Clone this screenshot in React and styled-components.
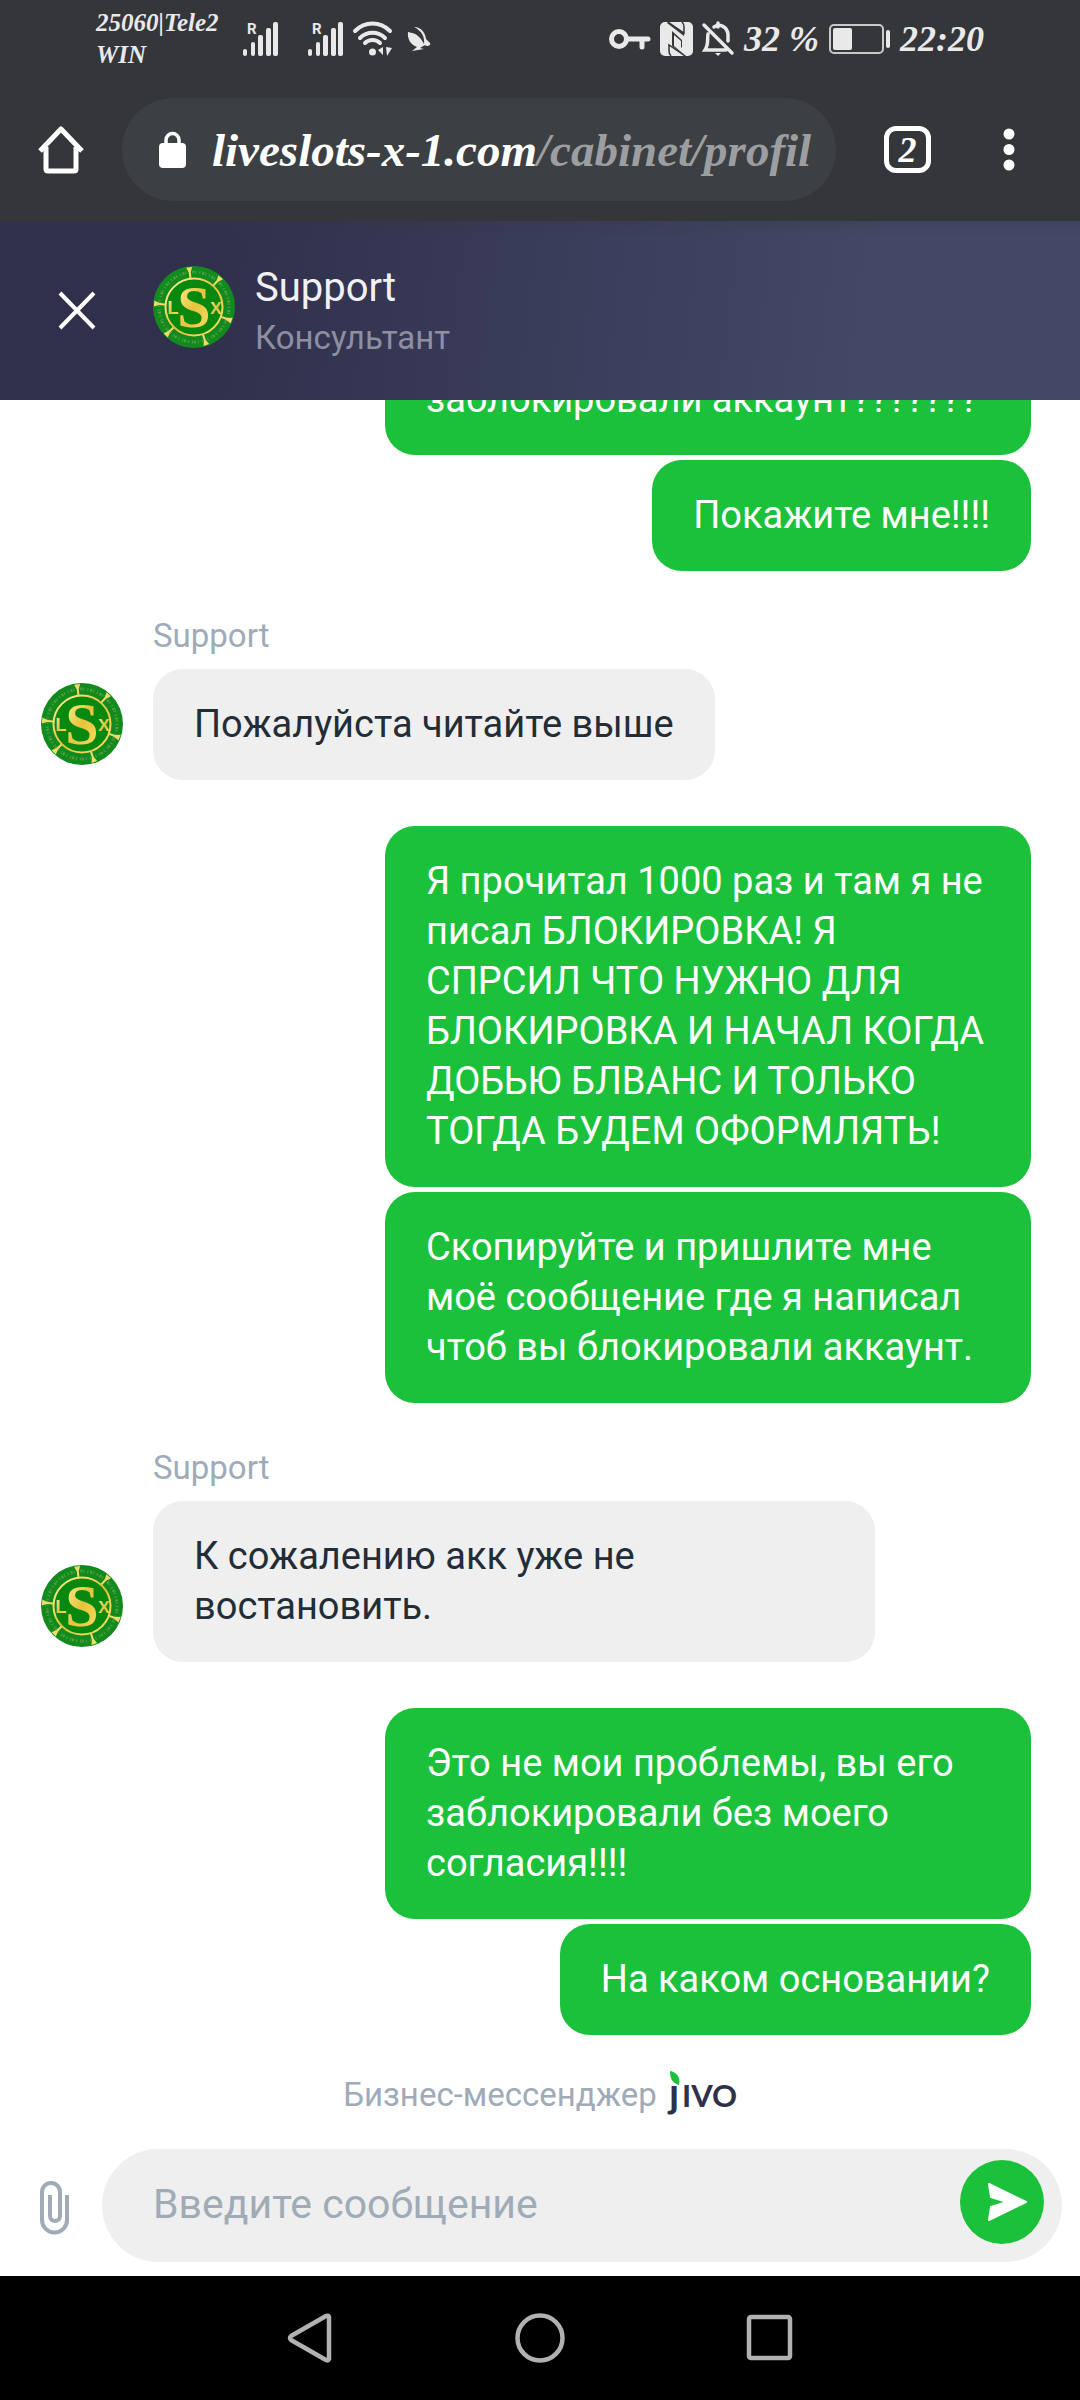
import React from "react";
import styled, { createGlobalStyle } from "styled-components";

const GlobalStyle = createGlobalStyle`
  *, *::before, *::after { box-sizing: border-box; }
  body {
    margin: 0;
    background: #fff;
    font-family: Roboto, "Noto Sans", sans-serif;
  }
  button {
    display: flex;
    align-items: center;
    justify-content: center;
    flex: none;
    padding: 0;
    border: 0;
    background: none;
    color: inherit;
    font: inherit;
    cursor: pointer;
  }
  svg { display: block; flex: none; overflow: visible; }
`;

const Shell = styled.div`
  display: flex;
  flex-direction: column;
  height: 100vh;
`;

/* ---------- system status ---------- */

const StatusBar = styled.div`
  display: flex;
  align-items: center;
  justify-content: space-between;
  height: 78px;
  flex: none;
  padding: 0 96px;
  background: #35363a;
  color: #e9e9e9;
  font-family: "Liberation Serif", serif;
  font-style: italic;
  font-weight: 700;
`;

const StatusGroup = styled.div`
  display: flex;
  align-items: center;
  gap: 10px;
`;

const Carrier = styled.div`
  margin-right: 14px;
  font-size: 25px;
  line-height: 32px;
`;

const SimSlot = styled.div`
  padding-right: ${(p) => (p.$spaced ? "20px" : "0")};
`;

const StatusText = styled.span`
  font-size: 36px;
  line-height: 40px;
  white-space: nowrap;
`;

/* ---------- browser toolbar ---------- */

const Toolbar = styled.div`
  display: flex;
  align-items: center;
  height: 143px;
  flex: none;
  padding: 0 46px 0 36px;
  background: #35363a;
  color: #fff;
`;

const ToolButton = styled.button`
  width: 50px;
  height: 50px;
`;

const TabsButton = styled(ToolButton)`
  width: 47px;
  margin-right: 53px;
`;

const AddressBar = styled.div`
  display: flex;
  flex: 1;
  align-items: center;
  gap: 26px;
  min-width: 0;
  height: 103px;
  margin: 0 48px 0 36px;
  padding: 0 20px 0 37px;
  border-radius: 52px;
  background: #3c4043;
`;

const Address = styled.div`
  flex: 1;
  min-width: 0;
  overflow: hidden;
  color: #9d9ea1;
  font-family: "Liberation Serif", serif;
  font-size: 47px;
  font-style: italic;
  font-weight: 700;
  line-height: 60px;
  white-space: nowrap;
`;

const Host = styled.span`
  color: #fff;
`;

const TabCount = styled.span`
  display: flex;
  align-items: center;
  justify-content: center;
  width: 47px;
  height: 47px;
  border: 5px solid #fff;
  border-radius: 12px;
  font-family: "Liberation Serif", serif;
  font-size: 36px;
  font-style: italic;
  font-weight: 700;
  line-height: 36px;
`;

/* ---------- chat ---------- */

const ChatHeader = styled.header`
  display: flex;
  align-items: center;
  height: 179px;
  flex: none;
  padding: 0 52px;
  background:
    linear-gradient(rgba(53, 54, 58, 0.25), rgba(53, 54, 58, 0) 16px),
    linear-gradient(97deg, #30304c 20%, #434867 80%);
`;

const CloseButton = styled.button`
  width: 50px;
  height: 50px;
  margin-right: 51px;
`;

const HeaderAvatar = styled.div`
  margin: 0 20px 8px 0;
`;

const Agent = styled.div`
  display: flex;
  flex-direction: column;
  gap: 6px;
`;

const AgentName = styled.h1`
  margin: 0;
  color: #f1f1f4;
  font-size: 40px;
  font-weight: 400;
  line-height: 48px;
`;

const AgentRole = styled.div`
  color: #8e8fa0;
  font-size: 33px;
  line-height: 40px;
`;

const Thread = styled.main`
  display: flex;
  flex: 1;
  flex-direction: column;
  justify-content: flex-end;
  gap: 46px;
  min-height: 0;
  padding: 0 49px 0 41px;
  overflow: hidden;
`;

const Outgoing = styled.section`
  display: flex;
  flex: none;
  flex-direction: column;
  align-items: flex-end;
  align-self: flex-end;
  gap: 5px;
  width: 100%;
  max-width: 646px;
`;

const Incoming = styled.section`
  display: grid;
  flex: none;
  grid-template-columns: 82px minmax(0, 722px);
  column-gap: 30px;
  justify-items: start;
`;

const Sender = styled.div`
  grid-column: 2;
  margin-bottom: 14px;
  color: #9fabb7;
  font-size: 33px;
  line-height: 38px;
`;

const IncomingAvatar = styled.div`
  align-self: end;
  padding-bottom: 15px;
`;

const Bubble = styled.p`
  min-width: ${(p) => (p.$wide ? "100%" : "0")};
  margin: 0;
  padding: 30px 41px 31px;
  border-radius: 30px;
  background: ${(p) => (p.$mine ? "#1bc13a" : "#efefef")};
  color: ${(p) => (p.$mine ? "#fff" : "#222d38")};
  font-size: 38px;
  line-height: 50px;
`;

const Branding = styled.a`
  display: flex;
  align-items: center;
  justify-content: center;
  gap: 12px;
  height: 114px;
  flex: none;
  padding-top: 6px;
  color: #9fabb7;
  font-size: 33px;
  line-height: 40px;
  text-decoration: none;
`;

const Composer = styled.form`
  display: flex;
  align-items: center;
  flex: none;
  padding: 0 18px 14px 30px;
`;

const AttachButton = styled.button`
  width: 50px;
  height: 60px;
  margin: 4px 22px 0 0;
`;

const Field = styled.div`
  display: flex;
  flex: 1;
  min-width: 0;
  padding: 11px 18px 18px 51px;
  border-radius: 57px;
  background: #efefef;
`;

const MessageInput = styled.input`
  flex: 1;
  min-width: 0;
  padding: 4px 0 0;
  border: 0;
  outline: 0;
  background: none;
  color: #222d38;
  font-family: inherit;
  font-size: 41px;
  line-height: 50px;
  &::placeholder { color: #9fabb7; opacity: 1; }
`;

const SendButton = styled.button`
  width: 84px;
  height: 84px;
  border-radius: 50%;
  background: #1bc13a;
`;

const SystemNav = styled.nav`
  display: flex;
  align-items: center;
  justify-content: center;
  gap: 180px;
  height: 124px;
  flex: none;
  background: #000;
`;

const NavButton = styled.button`
  width: 50px;
  height: 50px;
`;

/* ---------- drawings ---------- */

const Signal = () => (
  <svg width="35" height="34" viewBox="0 0 35 34" fill="#e9e9e9">
    <text x="4" y="12" fontFamily="Roboto, sans-serif" fontSize="15" fontStyle="normal" fontWeight="700">R</text>
    <rect x="0" y="27" width="4" height="7" rx="2" />
    <rect x="8" y="20" width="4" height="14" rx="2" />
    <rect x="15" y="13" width="5" height="21" rx="2" />
    <rect x="23" y="6" width="5" height="28" rx="2" />
    <rect x="30" y="0" width="5" height="34" rx="2" />
  </svg>
);

const Wifi = () => (
  <svg width="40" height="34" viewBox="0 0 40 34" fill="none" stroke="#e9e9e9" strokeWidth="4" strokeLinecap="round">
    <path d="M2 9C12-1 27-1 37 9M7 16c7-7 18-7 25 0M12 21c4-4 11-4 15 0" />
    <circle cx="19.500" cy="30" r="3.500" fill="#e9e9e9" stroke="none" />
    <path d="M30 25v8l-5-5zM33 25l6 1-5 8z" fill="#e9e9e9" stroke="none" />
  </svg>
);

const Bird = () => (
  <svg width="33" height="26" viewBox="0 0 33 26" fill="#e9e9e9">
    <path d="M5 6c4 1 7 1 10 4 4 3 5 7 7 9l-5 3 4 1-12 2 5-4C8 19 4 13 5 6z" />
    <path d="M11 1c7 0 11 5 12 12l4 4c1 2-1 3-3 3l-3-1c1-8-2-14-10-18z" />
  </svg>
);

const Key = () => (
  <svg width="41" height="22" viewBox="0 0 41 22" fill="none" stroke="#e9e9e9" strokeWidth="5" strokeLinecap="round">
    <circle cx="10" cy="11" r="7.500" />
    <path d="M19 11h20M33 12v7" />
  </svg>
);

const Nfc = () => (
  <svg width="33" height="34" viewBox="0 0 33 34">
    <rect width="33" height="34" rx="5" fill="#e9e9e9" />
    <path d="M8 0l16 11V5q0-3-2-5M25 34L9 23v6q0 3 2 5" fill="none" stroke="#35363a" strokeWidth="1.500" />
    <path d="M8 0l16 11v3L7 1zM25 34L12 24V9l10 9v8l-8-8v6l12 10z" fill="#35363a" />
    <path d="M14 13v9l7 5v-8z" fill="#e9e9e9" />
  </svg>
);

const BellOff = () => (
  <svg width="31" height="34" viewBox="0 0 31 34" fill="none" stroke="#e9e9e9" strokeWidth="3.500" strokeLinecap="round">
    <path d="M5 12c-1 5 1 10-3 16h21M11 5c6-4 13 0 14 7v7M15 1v4M1 3l28 28" />
    <path d="M12 31h6l-3 3z" fill="#e9e9e9" stroke="none" />
  </svg>
);

const Battery = () => (
  <svg width="61" height="30" viewBox="0 0 61 30">
    <rect x="1" y="1" width="53" height="28" rx="4" fill="none" stroke="#c9c9ca" strokeWidth="2" />
    <rect x="4" y="4" width="19" height="22" rx="2" fill="#e9e9e9" />
    <rect x="57" y="6" width="4" height="18" rx="2" fill="#e9e9e9" />
  </svg>
);

const Home = () => (
  <svg width="48" height="50" viewBox="0 0 48 50" fill="none" stroke="#fff" strokeWidth="5" strokeLinejoin="round">
    <path d="M3 26L24 4l21 22M9 22v22q0 2 2 2h26q2 0 2-2V22" />
  </svg>
);

const Lock = () => (
  <svg width="27" height="37" viewBox="0 0 27 37">
    <path d="M7 14V9a6.500 6.500 0 0113 0v5" fill="none" stroke="#fff" strokeWidth="3.500" />
    <rect y="12" width="27" height="25" rx="4" fill="#fff" />
  </svg>
);

const Dots = () => (
  <svg width="12" height="43" viewBox="0 0 12 43" fill="#fff">
    <circle cx="6" cy="6" r="5.500" />
    <circle cx="6" cy="21.500" r="5.500" />
    <circle cx="6" cy="37" r="5.500" />
  </svg>
);

const Cross = () => (
  <svg width="36" height="37" viewBox="0 0 36 37" stroke="#fff" strokeWidth="4">
    <path d="M1 1l34 35M35 1L1 36" />
  </svg>
);

const Coin = ({ id }) => (
  <svg width="82" height="82" viewBox="0 0 82 82" role="img" aria-label="LSX">
    <defs>
      <linearGradient id={id} x1="0" y1="0" x2="1" y2="1">
        <stop offset="0" stopColor="#fff3a0" />
        <stop offset="0.500" stopColor="#e6c33c" />
        <stop offset="1" stopColor="#fbe467" />
      </linearGradient>
    </defs>
    <circle cx="41" cy="41" r="41" fill="#128a1e" />
    <circle cx="41" cy="41" r="35" fill="none" stroke="#8fb565" strokeWidth="3" strokeDasharray="1 2 2 1 1 3" opacity="0.500" />
    {[-7, 42, 110, 162, 225, 275].map((angle) => (
      <path key={angle} d="M38 1h6l-2 5v6h-2V6z" fill="#f1dc6a" transform={`rotate(${angle} 41 41)`} />
    ))}
    <circle cx="41" cy="41" r="28.500" fill="#08880f" stroke={`url(#${id})`} strokeWidth="2" />
    <g fill={`url(#${id})`} fontFamily="Liberation Serif, serif" fontWeight="700" textAnchor="middle">
      <text x="41" y="61" fontSize="60">S</text>
      <text x="20" y="48" fontSize="18" fontFamily="Liberation Sans, sans-serif">L</text>
      <text x="63" y="48" fontSize="17" fontFamily="Liberation Sans, sans-serif">X</text>
    </g>
  </svg>
);

const JivoLogo = () => (
  <svg width="68" height="50" viewBox="0 0 68 50" fill="#2f3148" role="img" aria-label="jivo">
    <g fontFamily="Lato, sans-serif" fontWeight="700">
      <text x="0" y="37" fontSize="40">j</text>
      <text x="13" y="37" fontSize="31">IVO</text>
    </g>
    <path d="M0 0h13v14H0z" fill="#fff" />
    <path d="M1 1c6 1 11 6 9 14C3 13 1 8 1 1z" fill="#1bc13a" />
  </svg>
);

const Clip = () => (
  <svg width="30" height="54" viewBox="0 0 30 54" fill="none" stroke="#a1abb8" strokeWidth="4">
    <path d="M27 14v25a12 12 0 01-25 0V11a9 9 0 0118 0v24a5 5 0 01-10 0V14" />
  </svg>
);

const Plane = () => (
  <svg width="84" height="84" viewBox="0 0 84 84" fill="#fff" stroke="#fff" strokeWidth="2" strokeLinejoin="round">
    <path d="M29 24l37 18-37 18 2-13 16-5-16-5z" />
  </svg>
);

const navStroke = { fill: "none", stroke: "#b1b1b1", strokeWidth: 4.5, strokeLinejoin: "round" };

const messages = [
  {
    mine: true,
    items: [{ text: "заблокировали аккаунт???????", wide: true }, { text: "Покажите мне!!!!" }],
  },
  { items: [{ text: "Пожалуйста читайте выше" }] },
  {
    mine: true,
    items: [
      { text: "Я прочитал 1000 раз и там я не писал БЛОКИРОВКА! Я СПРСИЛ ЧТО НУЖНО ДЛЯ БЛОКИРОВКА И НАЧАЛ КОГДА ДОБЬЮ БЛВАНС И ТОЛЬКО ТОГДА БУДЕМ ОФОРМЛЯТЬ!" },
      { text: "Скопируйте и пришлите мне моё сообщение где я написал чтоб вы блокировали аккаунт." },
    ],
  },
  { items: [{ text: "К сожалению акк уже не востановить." }] },
  {
    mine: true,
    items: [
      { text: "Это не мои проблемы, вы его заблокировали без моего согласия!!!!" },
      { text: "На каком основании?" },
    ],
  },
];

export default function App() {
  return (
    <Shell>
      <GlobalStyle />
      <StatusBar>
        <StatusGroup>
          <Carrier>25060|Tele2<br />WIN</Carrier>
          <SimSlot $spaced><Signal /></SimSlot>
          <SimSlot><Signal /></SimSlot>
          <Wifi />
          <Bird />
        </StatusGroup>
        <StatusGroup>
          <Key />
          <Nfc />
          <BellOff />
          <StatusText>32 %</StatusText>
          <Battery />
          <StatusText>22:20</StatusText>
        </StatusGroup>
      </StatusBar>

      <Toolbar>
        <ToolButton aria-label="Главная"><Home /></ToolButton>
        <AddressBar>
          <Lock />
          <Address><Host>liveslots-x-1.com</Host>/cabinet/profil</Address>
        </AddressBar>
        <TabsButton aria-label="Вкладки: 2"><TabCount>2</TabCount></TabsButton>
        <ToolButton aria-label="Меню"><Dots /></ToolButton>
      </Toolbar>

      <ChatHeader>
        <CloseButton aria-label="Закрыть"><Cross /></CloseButton>
        <HeaderAvatar><Coin id="coin-header" /></HeaderAvatar>
        <Agent>
          <AgentName>Support</AgentName>
          <AgentRole>Консультант</AgentRole>
        </Agent>
      </ChatHeader>

      <Thread>
        {messages.map((group, g) =>
          group.mine ? (
            <Outgoing key={g}>
              {group.items.map((m) => (
                <Bubble key={m.text} $mine $wide={m.wide}>{m.text}</Bubble>
              ))}
            </Outgoing>
          ) : (
            <Incoming key={g}>
              <Sender>Support</Sender>
              <IncomingAvatar><Coin id={`coin-${g}`} /></IncomingAvatar>
              <Bubble>{group.items[0].text}</Bubble>
            </Incoming>
          )
        )}
      </Thread>

      <Branding href="#jivo">
        Бизнес-мессенджер
        <JivoLogo />
      </Branding>

      <Composer onSubmit={(e) => e.preventDefault()}>
        <AttachButton type="button" aria-label="Прикрепить файл"><Clip /></AttachButton>
        <Field>
          <MessageInput aria-label="Сообщение" placeholder="Введите сообщение" />
          <SendButton type="submit" aria-label="Отправить"><Plane /></SendButton>
        </Field>
      </Composer>

      <SystemNav>
        <NavButton aria-label="Назад">
          <svg width="50" height="50" viewBox="0 0 50 50" {...navStroke}><path d="M44 4v42q-1 2-3 1L6 27q-2-2 0-4L41 3q2-1 3 1z" /></svg>
        </NavButton>
        <NavButton aria-label="Домой">
          <svg width="50" height="50" viewBox="0 0 50 50" {...navStroke}><circle cx="25" cy="25" r="22.500" /></svg>
        </NavButton>
        <NavButton aria-label="Недавние">
          <svg width="50" height="50" viewBox="0 0 50 50" {...navStroke}><rect x="4" y="4" width="41" height="41" rx="2" /></svg>
        </NavButton>
      </SystemNav>
    </Shell>
  );
}
